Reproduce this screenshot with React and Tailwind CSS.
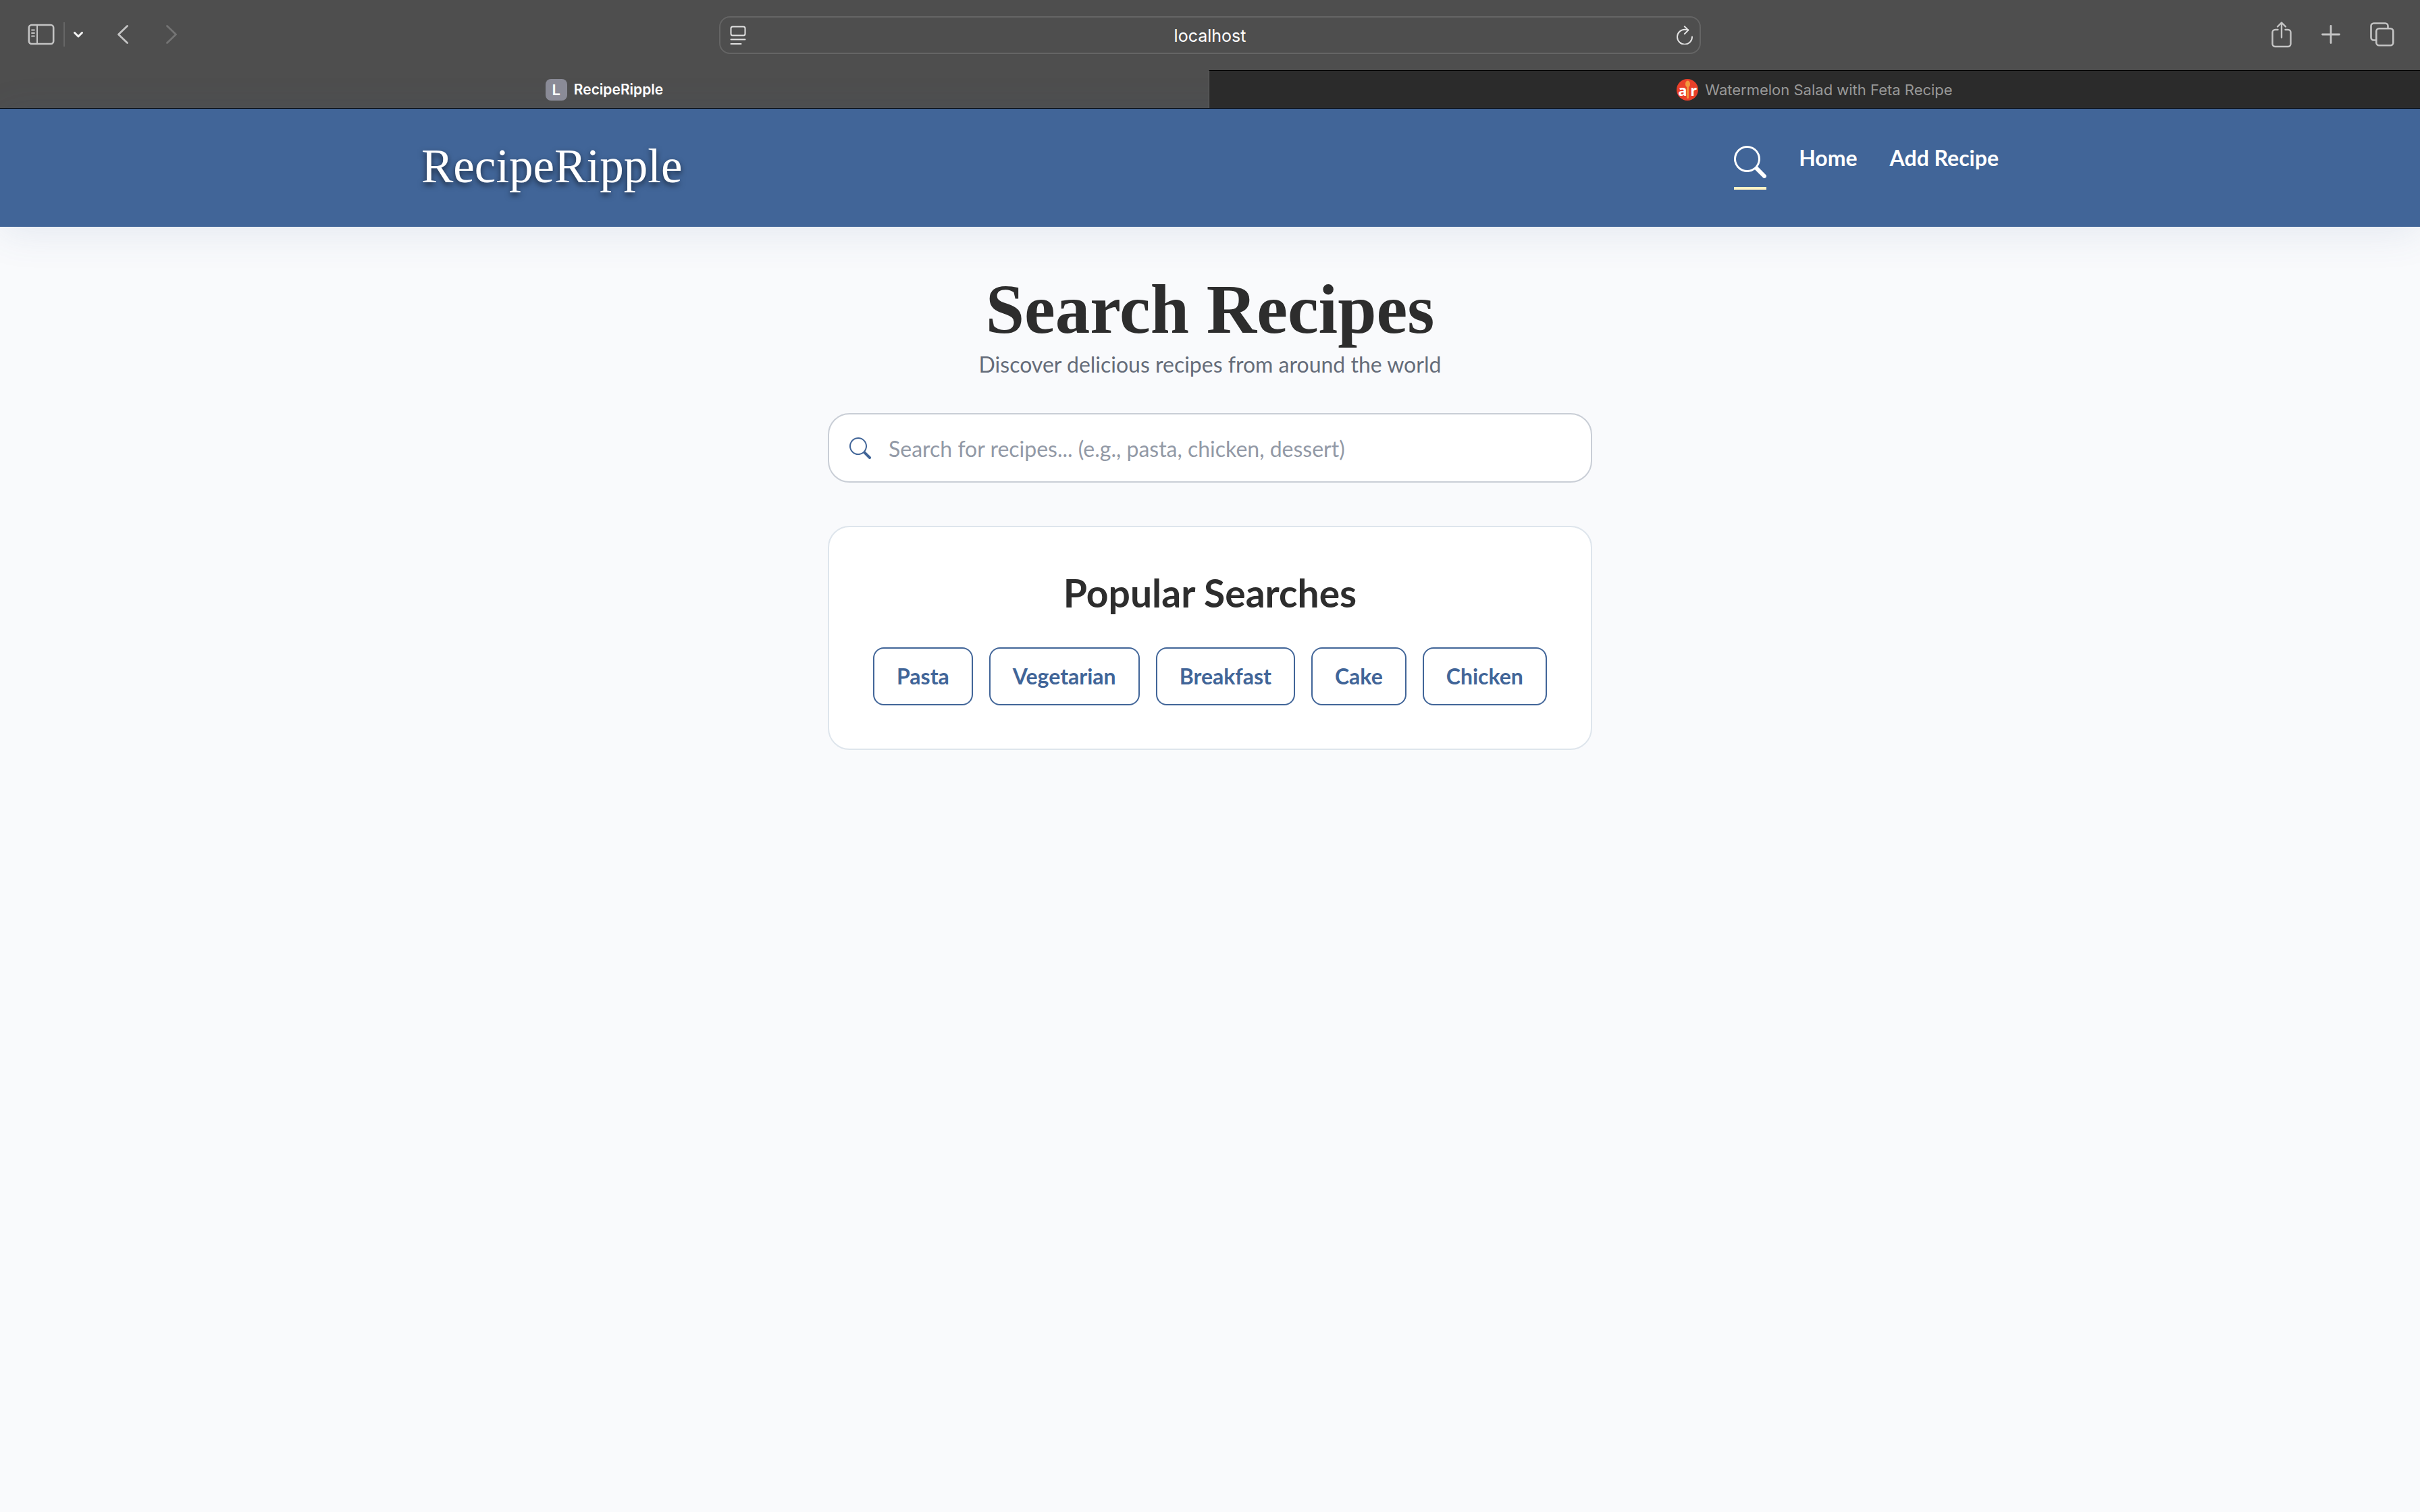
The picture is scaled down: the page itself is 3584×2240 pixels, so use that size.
import { BsSearch } from "react-icons/bs";

function SidebarIcon() {
  return (
    <svg className="h-8 w-10" viewBox="0 0 40 32" fill="none" stroke="#c4c4c4" strokeWidth="2.6" strokeLinecap="round">
      <rect x="1.8" y="2" width="36.4" height="28" rx="4" />
      <path d="M14 2v28" strokeWidth="2" />
      <path d="M6 9.5h4M6 14h4M6 18.5h4" strokeWidth="1.8" />
    </svg>
  );
}

function ShareIcon() {
  return (
    <svg className="h-10 w-8" viewBox="0 0 32 40" fill="none" stroke="#c4c4c4" strokeWidth="2.4" strokeLinecap="round" strokeLinejoin="round">
      <path d="M10.5 13H6.5a4 4 0 0 0-4 4v17a4 4 0 0 0 4 4h19a4 4 0 0 0 4-4V17a4 4 0 0 0-4-4h-4" />
      <path d="M16 24.5V3M10 8.500l6-6 6 6" />
    </svg>
  );
}

function TabsIcon() {
  return (
    <svg className="size-9" viewBox="0 0 36 36" fill="none" stroke="#c4c4c4" strokeWidth="2.6" strokeLinejoin="round">
      <rect x="9.3" y="9.3" width="25" height="25" rx="4" />
      <path d="M26.5 9V5.5a4 4 0 0 0-4-4h-17a4 4 0 0 0-4 4v17a4 4 0 0 0 4 4H9" />
    </svg>
  );
}

function ReaderIcon() {
  return (
    <svg className="h-7 w-6" viewBox="0 0 24 28" fill="none" stroke="#e2e2e2" strokeWidth="2" strokeLinecap="round">
      <rect x="1.5" y="1.5" width="21" height="13" rx="2.5" />
      <path d="M1.5 20.5h21M1.5 27h15" />
    </svg>
  );
}

function ReloadIcon() {
  return (
    <svg className="h-7 w-6" viewBox="0 0 24 28" fill="none" stroke="#e2e2e2" strokeWidth="2" strokeLinecap="round" strokeLinejoin="round">
      <path d="M23 16.5A11 11 0 1 1 12 5.700c2 0 3.500.2 5 .8" />
      <path d="M11.8 1.200l5.600 5.400-5.600 5.600" />
    </svg>
  );
}

function RecipeFavicon() {
  return (
    <span className="relative flex size-8 items-center justify-between rounded-full bg-[#ea4029] px-[2px] font-['Open_Sans',sans-serif] text-[22px] leading-none font-bold text-white">
      <span>a</span>
      <span>r</span>
      <svg className="absolute inset-0 size-8" viewBox="0 0 32 32" fill="#f2993e">
        <ellipse cx="16.5" cy="7.5" rx="3.5" ry="5" />
        <rect x="15.3" y="10" width="2.6" height="19" rx="1.3" />
      </svg>
    </span>
  );
}

function BrowserChrome() {
  return (
    <div className="bg-[#4e4e4e] font-[Inter,sans-serif]">
      <div className="grid h-[104px] grid-cols-[1fr_minmax(0,1454px)_1fr] items-center">
        <div className="flex items-center pl-[41px] pb-[2px]">
          <button aria-label="Sidebar"><SidebarIcon /></button>
          <span className="ml-[13px] h-9 w-[2px] bg-[#666]" />
          <button aria-label="Tab groups" className="ml-3">
            <svg className="h-4 w-4" viewBox="0 0 16 16" fill="none" stroke="#f4f4f4" strokeWidth="3" strokeLinecap="round" strokeLinejoin="round">
              <path d="M2.5 5.500l5.500 5.500 5.500-5.500" />
            </svg>
          </button>
          <button aria-label="Back" className="ml-12">
            <svg className="h-8 w-5" viewBox="0 0 20 32" fill="none" stroke="#c4c4c4" strokeWidth="2.8" strokeLinecap="round" strokeLinejoin="round">
              <path d="M16.5 3.500L3.500 16l13 12.500" />
            </svg>
          </button>
          <button aria-label="Forward" className="ml-[52px]">
            <svg className="h-8 w-5" viewBox="0 0 20 32" fill="none" stroke="#747474" strokeWidth="2.8" strokeLinecap="round" strokeLinejoin="round">
              <path d="M3.5 3.500L16.500 16l-13 12.500" />
            </svg>
          </button>
        </div>
        <div className="flex h-14 items-center rounded-[16px] border-2 border-[#656565] pr-[10px] pl-[14px]">
          <button aria-label="Page menu"><ReaderIcon /></button>
          <input aria-label="Address" defaultValue="localhost" className="min-w-0 flex-1 bg-transparent pt-[2px] pr-1 text-center text-[25px] leading-8 text-white outline-none" />
          <button aria-label="Reload"><ReloadIcon /></button>
        </div>
        <div className="flex items-center justify-end pr-[38px] pb-[2px]">
          <button aria-label="Share"><ShareIcon /></button>
          <button aria-label="New tab" className="ml-[43px]">
            <svg className="h-7 w-7" viewBox="0 0 28 28" fill="none" stroke="#c4c4c4" strokeWidth="2.8" strokeLinecap="round">
              <path d="M14 1.500v25M1.500 14h25" />
            </svg>
          </button>
          <button aria-label="Tab overview" className="ml-[44px]"><TabsIcon /></button>
        </div>
      </div>
      <div className="grid h-[57px] grid-cols-[1790fr_1794fr] border-b border-black">
        <button className="flex items-center justify-center gap-[10px] pt-[2px] text-[21px] leading-6 font-semibold text-white">
          <span className="flex size-8 items-center justify-center rounded-lg bg-[#8a8b97] text-[22px] leading-none">L</span>
          RecipeRipple
        </button>
        <button className="flex items-center justify-center gap-[10px] border-t border-l border-t-black border-l-[#666] bg-[#2b2b2b] pt-[1px] text-[22px] leading-6 text-[#989898]">
          <RecipeFavicon />
          Watermelon Salad with Feta Recipe
        </button>
      </div>
    </div>
  );
}

function SiteHeader() {
  return (
    <header className="bg-[#416598] shadow-[0_8px_60px_rgba(65,101,152,0.12)]">
      <div className="mx-auto flex h-[175px] max-w-[2336px] items-start justify-between pt-[45px] text-white">
        <a href="#home" className="font-['Liberation_Serif',serif] text-[71px] leading-[80px] [text-shadow:0_4px_8px_rgba(0,0,0,0.6)]">
          RecipeRipple
        </a>
        <nav className="flex items-start gap-12 pt-[10px] text-[32px] leading-9 font-bold">
          <a href="#search" aria-label="Search" className="border-b-4 border-[#fff2c4] pb-[13px]">
            <BsSearch className="size-12" />
          </a>
          <a href="#home">Home</a>
          <a href="#add">Add Recipe</a>
        </nav>
      </div>
    </header>
  );
}

const searches = ["Pasta", "Vegetarian", "Breakfast", "Cake", "Chicken"];

export default function App() {
  return (
    <div className="min-h-screen bg-[#f9fafc] font-[Lato,sans-serif]">
      <BrowserChrome />
      <SiteHeader />
      <main className="mx-auto max-w-[1132px] pt-16 text-center">
        <h1 className="font-['Liberation_Serif',serif] text-[103px] leading-[116px] font-bold text-[#2d2d2d]">Search Recipes</h1>
        <p className="text-[32px] leading-[48px] text-[#656c79]">Discover delicious recipes from around the world</p>
        <label className="mt-12 flex h-[103px] items-center gap-[26px] rounded-[32px] border-2 border-[#c9ced6] bg-white px-[30px]">
          <BsSearch className="size-8 shrink-0 text-[#416598]" />
          <input
            type="search"
            aria-label="Search for recipes"
            placeholder="Search for recipes... (e.g., pasta, chicken, dessert)"
            className="w-full bg-transparent pt-[2px] text-[32px] leading-12 outline-none placeholder:text-[#9299a6]"
          />
        </label>
        <section className="mt-16 rounded-[32px] border-2 border-[#dee5ec] bg-white p-16">
          <h2 className="text-[57px] leading-[66px] font-bold text-[#2d2d2d]">Popular Searches</h2>
          <div className="mt-12 flex justify-center gap-6">
            {searches.map((name) => (
              <button key={name} className="rounded-[16px] border-2 border-[#416598] px-[33px] py-[17px] text-[32px] leading-12 font-bold text-[#416598]">
                {name}
              </button>
            ))}
          </div>
        </section>
      </main>
    </div>
  );
}
